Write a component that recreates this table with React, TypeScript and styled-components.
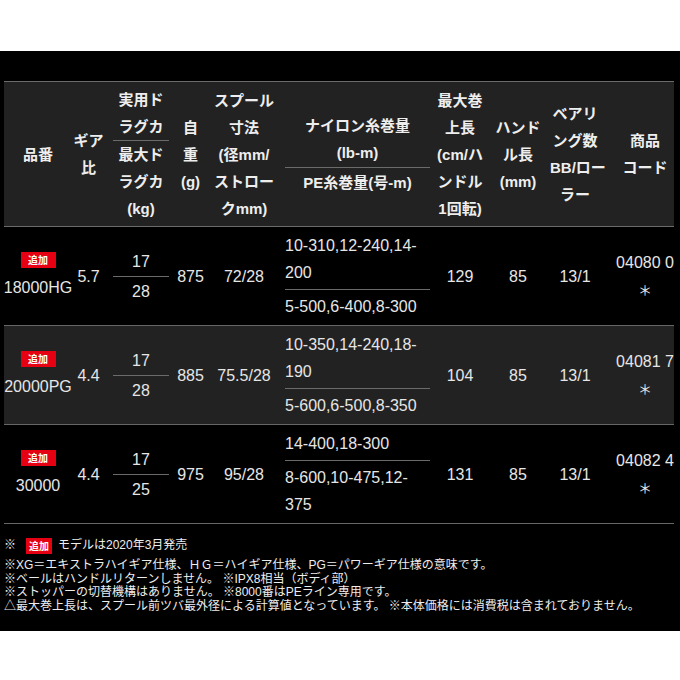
import React from "react";
import styled, { createGlobalStyle } from "styled-components";

interface IModel {
  name: string;
  gear: string;
  drag: [string, string];
  weight: string;
  spool: string;
  nylon: string[];
  pe: string[];
  retrieve: string;
  handle: string;
  bearing: string;
  code: string;
}

const models: IModel[] = [
  {
    name: "18000HG",
    gear: "5.7",
    drag: ["17", "28"],
    weight: "875",
    spool: "72/28",
    nylon: ["10-310,12-240,14-", "200"],
    pe: ["5-500,6-400,8-300"],
    retrieve: "129",
    handle: "85",
    bearing: "13/1",
    code: "04080 0",
  },
  {
    name: "20000PG",
    gear: "4.4",
    drag: ["17", "28"],
    weight: "885",
    spool: "75.5/28",
    nylon: ["10-350,14-240,18-", "190"],
    pe: ["5-600,6-500,8-350"],
    retrieve: "104",
    handle: "85",
    bearing: "13/1",
    code: "04081 7",
  },
  {
    name: "30000",
    gear: "4.4",
    drag: ["17", "25"],
    weight: "975",
    spool: "95/28",
    nylon: ["14-400,18-300"],
    pe: ["8-600,10-475,12-", "375"],
    retrieve: "131",
    handle: "85",
    bearing: "13/1",
    code: "04082 4",
  },
];

const colWidths = [68, 33, 72, 27, 80, 150, 52, 64, 50, 74];

const GlobalStyle = createGlobalStyle`
  html, body {
    margin: 0;
    padding: 0;
    background: #fff;
  }
  body {
    font-family: "Liberation Sans", "Noto Sans CJK JP", sans-serif;
  }
`;

const Page = styled.div`
  width: 680px;
  padding-top: 51px;
`;

const Panel = styled.div`
  background: #000;
  color: #e6e6e6;
  padding: 30px 6px 18px 4px;
`;

const SpecTable = styled.table`
  width: 670px;
  border-collapse: collapse;
  table-layout: fixed;
`;

const Col = styled.col<{ $w: number }>`
  width: ${(p) => p.$w}px;
`;

const HeadRow = styled.tr`
  background: #222;
  border-top: 1px solid #6b6b6b;
  border-bottom: 1px solid #6b6b6b;
`;

const HeadCell = styled.th`
  height: 144px;
  padding: 0;
  font-size: 15px;
  font-weight: 700;
  line-height: 27px;
  color: #eee;
  text-align: center;
  vertical-align: middle;
  white-space: nowrap;
`;

const BodyRow = styled.tr<{ $shade: boolean }>`
  background: ${(p) => (p.$shade ? "#222" : "#000")};
  border-bottom: 1px solid #666;
`;

const Cell = styled.td<{ $align?: string }>`
  height: 98px;
  padding: 0;
  font-size: 16px;
  line-height: 27px;
  text-align: ${(p) => p.$align || "center"};
  vertical-align: middle;
  white-space: nowrap;
`;

const Pair = styled.div<{ $left: number; $right: number }>`
  margin: 0 ${(p) => p.$right}px 0 ${(p) => p.$left}px;
`;

const Upper = styled.div<{ $gap: number }>`
  padding-bottom: ${(p) => p.$gap}px;
`;

const Lower = styled.div<{ $gap: number }>`
  border-top: 1px solid #6b6b6b;
  padding-top: ${(p) => p.$gap}px;
`;

const NameBox = styled.div`
  display: flex;
  flex-direction: column;
  align-items: center;
  gap: 6px;
  line-height: 27px;
`;

const Badge = styled.span<{ $w: number }>`
  display: inline-flex;
  align-items: center;
  justify-content: center;
  width: ${(p) => p.$w}px;
  height: 16px;
  background: #e50012;
  color: #fff;
  font-family: "Noto Sans CJK JP", sans-serif;
  font-size: 10px;
  font-weight: 700;
  line-height: 1;
`;

const CodeBox = styled.div`
  margin-left: 16px;
`;

const Star = styled.div`
  font-family: "Noto Sans CJK JP", sans-serif;
  font-size: 14px;
`;

const Notes = styled.div`
  padding-top: 12px;
  font-family: "Liberation Sans", "Noto Sans CJK JP", sans-serif;
  font-size: 12px;
  line-height: 13.5px;
  color: #eee;
`;

const LeadNote = styled.div`
  display: flex;
  align-items: center;
  height: 20px;
  margin-bottom: 3px;
`;

const Mark = styled.span`
  width: 22px;
`;

const LeadText = styled.span`
  margin-left: 6px;
`;

const lines = (arr: string[]) =>
  arr.map((t, i) => (
    <React.Fragment key={i}>
      {i > 0 && <br />}
      {t}
    </React.Fragment>
  ));

const App = () => {
  return (
    <Page>
      <GlobalStyle />
      <Panel>
        <SpecTable>
          <colgroup>
            {colWidths.map((w, i) => (
              <Col key={i} $w={w} />
            ))}
          </colgroup>
          <thead>
            <HeadRow>
              <HeadCell>品番</HeadCell>
              <HeadCell>{lines(["ギア", "比"])}</HeadCell>
              <HeadCell>
                <Pair $left={8} $right={8}>
                  <Upper $gap={0}>{lines(["実用ド", "ラグカ"])}</Upper>
                  <Lower $gap={0}>{lines(["最大ド", "ラグカ", "(kg)"])}</Lower>
                </Pair>
              </HeadCell>
              <HeadCell>{lines(["自", "重", "(g)"])}</HeadCell>
              <HeadCell>{lines(["スプール", "寸法", "(径mm/", "ストロー", "クmm)"])}</HeadCell>
              <HeadCell>
                <Pair $left={1} $right={4}>
                  <Upper $gap={1}>{lines(["ナイロン糸巻量", "(lb-m)"])}</Upper>
                  <Lower $gap={1}>PE糸巻量(号-m)</Lower>
                </Pair>
              </HeadCell>
              <HeadCell>{lines(["最大巻", "上長", "(cm/ハ", "ンドル", "1回転)"])}</HeadCell>
              <HeadCell>{lines(["ハンド", "ル長", "(mm)"])}</HeadCell>
              <HeadCell>{lines(["ベアリ", "ング数", "BB/ロー", "ラー"])}</HeadCell>
              <HeadCell>
                <CodeBox>{lines(["商品", "コード"])}</CodeBox>
              </HeadCell>
            </HeadRow>
          </thead>
          <tbody>
            {models.map((m, i) => (
              <BodyRow key={m.name} $shade={i === 1}>
                <Cell>
                  <NameBox>
                    <Badge $w={35}>追加</Badge>
                    {m.name}
                  </NameBox>
                </Cell>
                <Cell>{m.gear}</Cell>
                <Cell>
                  <Pair $left={8} $right={8}>
                    <Upper $gap={1}>{m.drag[0]}</Upper>
                    <Lower $gap={1}>{m.drag[1]}</Lower>
                  </Pair>
                </Cell>
                <Cell>{m.weight}</Cell>
                <Cell>{m.spool}</Cell>
                <Cell $align="left">
                  <Pair $left={1} $right={4}>
                    <Upper $gap={3}>{lines(m.nylon)}</Upper>
                    <Lower $gap={3}>{lines(m.pe)}</Lower>
                  </Pair>
                </Cell>
                <Cell>{m.retrieve}</Cell>
                <Cell>{m.handle}</Cell>
                <Cell>{m.bearing}</Cell>
                <Cell>
                  <CodeBox>
                    {m.code}
                    <Star>＊</Star>
                  </CodeBox>
                </Cell>
              </BodyRow>
            ))}
          </tbody>
        </SpecTable>
        <Notes>
          <LeadNote>
            <Mark>※</Mark>
            <Badge $w={26}>追加</Badge>
            <LeadText>モデルは2020年3月発売</LeadText>
          </LeadNote>
          <div>※XG＝エキストラハイギア仕様、ＨＧ＝ハイギア仕様、PG＝パワーギア仕様の意味です。</div>
          <div>※ベールはハンドルリターンしません。 ※IPX8相当（ボディ部）</div>
          <div>※ストッパーの切替機構はありません。 ※8000番はPEライン専用です。</div>
          <div>△最大巻上長は、スプール前ツバ最外径による計算値となっています。 ※本体価格には消費税は含まれておりません。</div>
        </Notes>
      </Panel>
    </Page>
  );
};

export default App;
